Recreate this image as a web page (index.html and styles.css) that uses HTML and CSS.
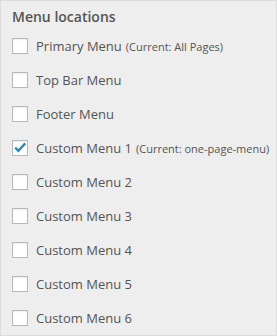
FILE: index.html
```html
<!DOCTYPE html>
<html lang="en">
<head>
  <meta charset="UTF-8">
  <title>Menu locations</title>
  <link rel="stylesheet" href="styles.css">
</head>
<body>
  <div class="panel">
    <h3 class="panel-title">Menu locations</h3>
    <ul class="locations">
      <li class="loc"><span class="box"></span><span class="name">Primary Menu</span> <span class="current">(Current: All Pages)</span></li>
      <li class="loc"><span class="box"></span><span class="name">Top Bar Menu</span></li>
      <li class="loc"><span class="box"></span><span class="name">Footer Menu</span></li>
      <li class="loc">
        <span class="box checked">
          <svg width="14" height="14" viewBox="0 0 14 14"><path d="M2.2 6.6 L5.4 9.8 L12.2 2.4" fill="none" stroke="#1e8cbe" stroke-width="2.3" stroke-linecap="butt" stroke-linejoin="miter"/></svg>
        </span><span class="name">Custom Menu 1</span> <span class="current">(Current: one-page-menu)</span>
      </li>
      <li class="loc"><span class="box"></span><span class="name">Custom Menu 2</span></li>
      <li class="loc"><span class="box"></span><span class="name">Custom Menu 3</span></li>
      <li class="loc"><span class="box"></span><span class="name">Custom Menu 4</span></li>
      <li class="loc"><span class="box"></span><span class="name">Custom Menu 5</span></li>
      <li class="loc"><span class="box"></span><span class="name">Custom Menu 6</span></li>
    </ul>
  </div>
</body>
</html>
```

FILE: styles.css
```css
body {
  margin: 0;
  font-family: 'Open Sans', sans-serif;
  color: #555;
}
.panel {
  box-sizing: border-box;
  width: 277px;
  height: 336px;
  border: 1px solid #ddd;
  background: #eee;
  padding: 6px 11px 0;
}
.panel-title {
  margin: 0 0 2px;
  font-size: 14px;
  font-weight: 600;
  line-height: 20px;
  color: #555;
}
.locations { list-style: none; margin: 0; padding: 0; }
.loc {
  display: flex;
  align-items: center;
  height: 34px;
  font-size: 13px;
  white-space: nowrap;
}
.box {
  box-sizing: border-box;
  width: 16px; height: 16px;
  flex: none;
  margin-right: 8px;
  border: 1px solid #b4b9be;
  background: #fff;
  box-shadow: inset 0 1px 2px rgba(0,0,0,.07);
  display: flex; align-items: center; justify-content: center;
}
.box svg { display: block; margin-top: -1px; }
.current {
  font-size: 11px;
  margin-left: 4px;
}
```
